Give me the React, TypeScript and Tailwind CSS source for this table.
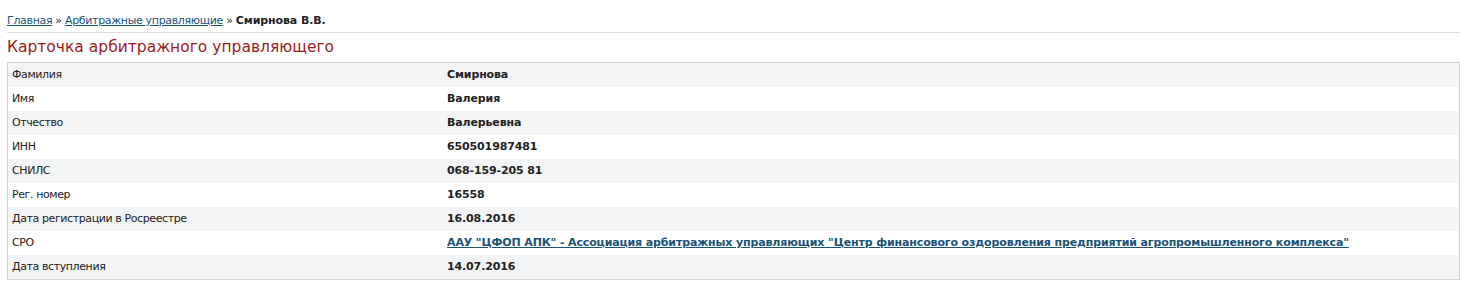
import React from "react";

const rows: { label: string; value: React.ReactNode }[] = [
  { label: "Фамилия", value: "Смирнова" },
  { label: "Имя", value: "Валерия" },
  { label: "Отчество", value: "Валерьевна" },
  { label: "ИНН", value: "650501987481" },
  { label: "СНИЛС", value: "068-159-205 81" },
  { label: "Рег. номер", value: "16558" },
  { label: "Дата регистрации в Росреестре", value: "16.08.2016" },
  {
    label: "СРО",
    value: (
      <a href="#" className="text-[#1b5377] underline">
        ААУ "ЦФОП АПК" - Ассоциация арбитражных управляющих "Центр финансового оздоровления предприятий агропромышленного комплекса"
      </a>
    ),
  },
  { label: "Дата вступления", value: "14.07.2016" },
];

export default function App() {
  return (
    <div className="bg-white w-[1468px] h-[289px] pl-[7px] pr-[8px] pt-[14px] text-[11px] text-[#222] font-['DejaVu_Sans',sans-serif]">
      <div className="h-[19px] leading-[14px] text-[11px] tracking-[-0.33px] border-b border-[#dcdcdc]">
        <a href="#" className="text-[#1b5377] underline">Главная</a>
        <span> » </span>
        <a href="#" className="text-[#1b5377] underline">Арбитражные управляющие</a>
        <span> » </span>
        <b className="tracking-[-0.1px]">Смирнова В.В.</b>
      </div>
      <h1 className="h-[29px] flex items-center text-[15.5px] text-[#9b1c1c] font-normal">
        Карточка арбитражного управляющего
      </h1>
      <div className="border border-[#d4d4d4]">
        {rows.map((r, i) => (
          <div
            key={i}
            className={`flex h-[24px] items-center ${i % 2 === 0 ? "bg-[#f3f4f6]" : "bg-white"}`}
          >
            <div className="w-[439px] pl-[4px] tracking-[-0.4px]">{r.label}</div>
            <div className="font-bold tracking-[-0.13px]">{r.value}</div>
          </div>
        ))}
      </div>
    </div>
  );
}
